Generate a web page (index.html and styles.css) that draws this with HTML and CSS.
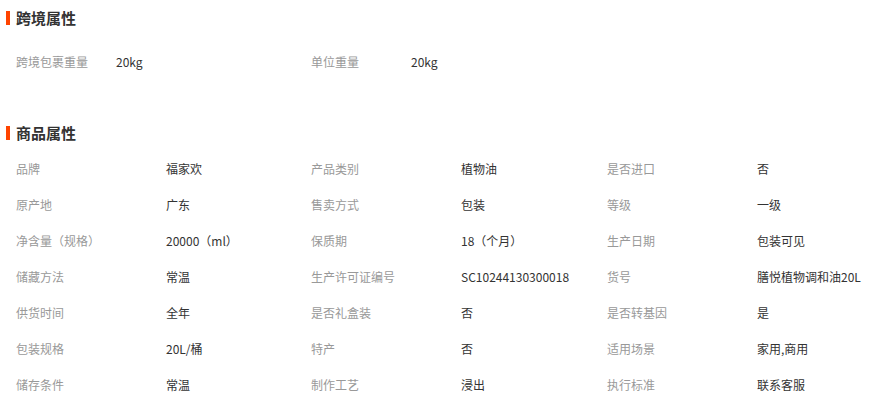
FILE: index.html
```html
<!DOCTYPE html>
<html lang="zh-CN">
<head>
    <meta charset="UTF-8">
    <title>商品属性</title>
    <link rel="stylesheet" href="styles.css">
</head>
<body>
    <div class="section section-cross">
        <h2 class="section-title">跨境属性</h2>
        <div class="attr-list narrow">
            <div class="attr"><span class="attr-name">跨境包裹重量</span><span class="attr-value">20kg</span></div>
            <div class="attr"><span class="attr-name">单位重量</span><span class="attr-value">20kg</span></div>
        </div>
    </div>

    <div class="section">
        <h2 class="section-title">商品属性</h2>
        <div class="attr-list">
            <div class="attr"><span class="attr-name">品牌</span><span class="attr-value">福家欢</span></div>
            <div class="attr"><span class="attr-name">产品类别</span><span class="attr-value">植物油</span></div>
            <div class="attr"><span class="attr-name">是否进口</span><span class="attr-value">否</span></div>

            <div class="attr"><span class="attr-name">原产地</span><span class="attr-value">广东</span></div>
            <div class="attr"><span class="attr-name">售卖方式</span><span class="attr-value">包装</span></div>
            <div class="attr"><span class="attr-name">等级</span><span class="attr-value">一级</span></div>

            <div class="attr"><span class="attr-name">净含量（规格）</span><span class="attr-value">20000（ml）</span></div>
            <div class="attr"><span class="attr-name">保质期</span><span class="attr-value">18（个月）</span></div>
            <div class="attr"><span class="attr-name">生产日期</span><span class="attr-value">包装可见</span></div>

            <div class="attr"><span class="attr-name">储藏方法</span><span class="attr-value">常温</span></div>
            <div class="attr"><span class="attr-name">生产许可证编号</span><span class="attr-value">SC10244130300018</span></div>
            <div class="attr"><span class="attr-name">货号</span><span class="attr-value">膳悦植物调和油20L</span></div>

            <div class="attr"><span class="attr-name">供货时间</span><span class="attr-value">全年</span></div>
            <div class="attr"><span class="attr-name">是否礼盒装</span><span class="attr-value">否</span></div>
            <div class="attr"><span class="attr-name">是否转基因</span><span class="attr-value">是</span></div>

            <div class="attr"><span class="attr-name">包装规格</span><span class="attr-value">20L/桶</span></div>
            <div class="attr"><span class="attr-name">特产</span><span class="attr-value">否</span></div>
            <div class="attr"><span class="attr-name">适用场景</span><span class="attr-value">家用,商用</span></div>

            <div class="attr"><span class="attr-name">储存条件</span><span class="attr-value">常温</span></div>
            <div class="attr"><span class="attr-name">制作工艺</span><span class="attr-value">浸出</span></div>
            <div class="attr"><span class="attr-name">执行标准</span><span class="attr-value">联系客服</span></div>
        </div>
    </div>
</body>
</html>
```

FILE: styles.css
```css
body {
    margin: 0;
    font-family: "Noto Sans CJK SC", "Liberation Sans", sans-serif;
    font-size: 12px;
    color: #333;
    background: #fff;
}
.section-cross {
    margin-bottom: 35px;
}
.section-title {
    position: relative;
    margin: 0;
    height: 36px;
    line-height: 36px;
    padding-left: 16px;
    font-size: 15px;
    font-weight: bold;
    color: #333;
}
.section-title::before {
    content: "";
    position: absolute;
    left: 6px;
    top: 11px;
    width: 4px;
    height: 14px;
    background: #f40;
}
.attr-list {
    display: grid;
    grid-template-columns: 295px 296px auto;
    padding-left: 16px;
}
.attr-list.narrow {
    margin-top: 8px;
    grid-template-columns: 295px auto;
}
.attr {
    display: flex;
    height: 36px;
    line-height: 36px;
    white-space: nowrap;
}
.attr-name {
    width: 150px;
    color: #999;
}
.narrow .attr-name {
    width: 100px;
}
.attr-value {
    color: #333;
}
```
